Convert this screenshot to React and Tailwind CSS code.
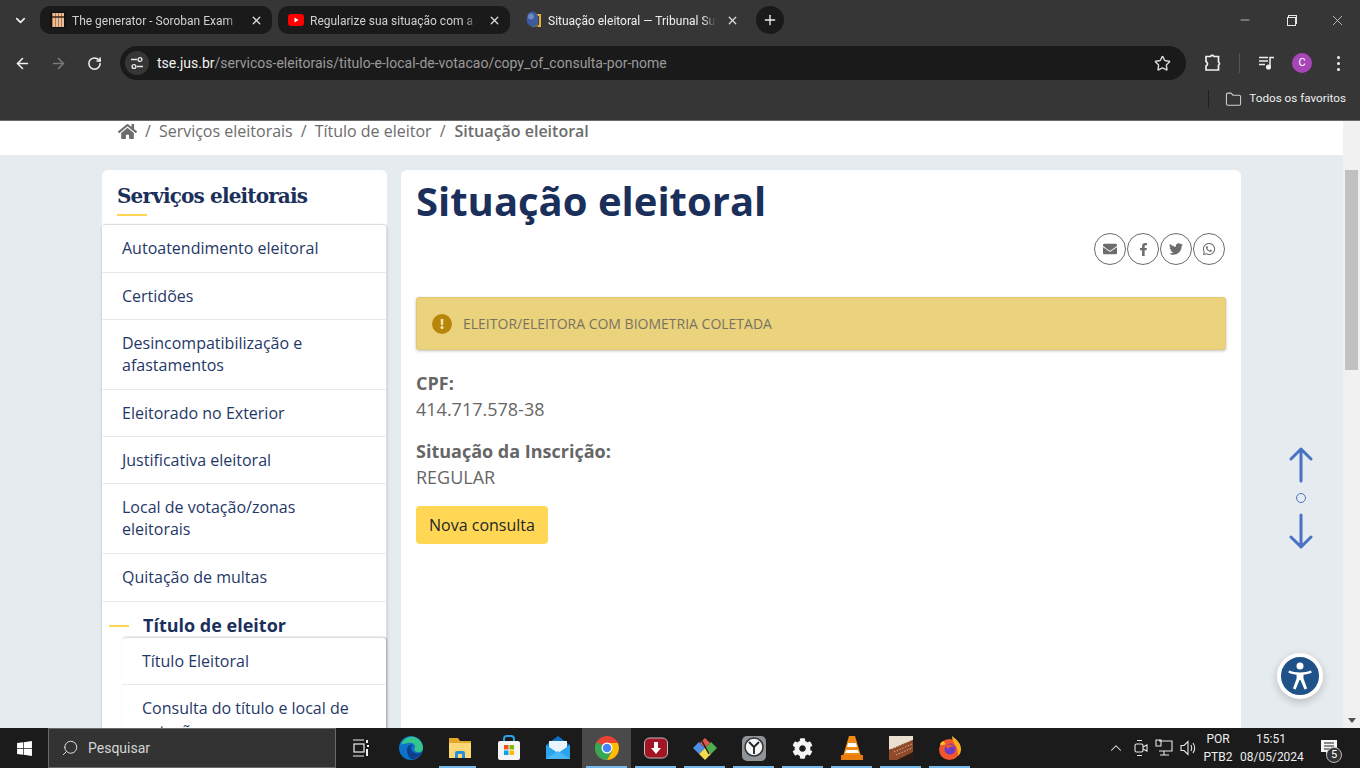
import {
  ChevronDown, ChevronUp, X, Plus, ArrowLeft, ArrowRight, RotateCw, Star, Minus, Folder, Search,
} from "lucide-react";
import { FaHome, FaEnvelope, FaFacebookF, FaTwitter, FaWhatsapp, FaExclamation, FaWindows, FaCog } from "react-icons/fa";

const uiFont = "font-['Roboto',sans-serif]";

function SorobanIcon() {
  return (
    <svg width="16" height="16" viewBox="0 0 16 16">
      <rect width="16" height="16" fill="#111" />
      <rect x="2" y="1" width="12" height="14" fill="#c8763a" />
      <path d="M4 1v14M7 1v14M10 1v14M13 1v14" stroke="#eee" strokeWidth="1.2" />
      <path d="M2 5h12" stroke="#3b2314" strokeWidth="1.5" />
    </svg>
  );
}

function YoutubeIcon() {
  return (
    <svg width="16" height="12" viewBox="0 0 16 12">
      <rect width="16" height="12" rx="3" fill="#f00" />
      <path d="M6.5 3.5v5l4-2.500z" fill="#fff" />
    </svg>
  );
}

function TseIcon() {
  return (
    <svg width="16" height="18" viewBox="0 0 16 18">
      <path d="M10 3h5v13H6v-2h7V5h-3z" fill="#e2b32c" />
      <path d="M12 16H6l6-5z" fill="#5c6b5c" />
      <ellipse cx="6.500" cy="8" rx="6" ry="7.500" fill="#3e5a9e" />
      <ellipse cx="5" cy="5.500" rx="3" ry="3" fill="#6f88c4" />
    </svg>
  );
}

function Tab({ icon, title, active }) {
  return (
    <div className={`w-[232px] h-[28px] rounded-[10px] flex items-center pl-[10px] pr-[9px] shrink-0 ${active ? "" : "bg-[#1a1a1a]"}`}>
      <div className="w-[16px] h-[16px] flex items-center justify-center shrink-0">{icon}</div>
      <div className={`ml-[6px] flex-1 overflow-hidden whitespace-nowrap text-[12px] pt-px [mask-image:linear-gradient(to_right,black_92%,transparent)] ${active ? "text-[#f0f0f0]" : "text-[#d0d0d0]"}`}>{title}</div>
      <X size={13} strokeWidth={2.4} className="ml-[10px] text-[#dddddd] shrink-0" />
    </div>
  );
}

function ExtensionIcon() {
  return (
    <svg width="18" height="18" viewBox="0 0 18 18" fill="none" stroke="#f0f0f0" strokeWidth="1.700">
      <path d="M2 2.500h4.500a2 2 0 0 1 3.500 0H14.500v5.500a1.800 1.800 0 0 1 0 3.200V16H2v-4a2.300 2.300 0 0 0 1-3.500 2.300 2.300 0 0 0-1-1z" />
    </svg>
  );
}

function MediaIcon() {
  return (
    <svg width="16" height="14" viewBox="0 0 16 14" fill="none" stroke="#f0f0f0" strokeWidth="1.500">
      <path d="M0 1.500h9M0 5h9M0 8.500h6" />
      <path d="M11 11V1.500h4" />
      <circle cx="9.500" cy="11" r="1.800" fill="#f0f0f0" />
    </svg>
  );
}

function TuneIcon() {
  return (
    <svg width="14" height="14" viewBox="0 0 14 14" fill="none" stroke="#e8e8e8" strokeWidth="1.400">
      <path d="M1 3.500h6M7 10.500h6" />
      <circle cx="10" cy="3.500" r="1.900" />
      <circle cx="4" cy="10.500" r="1.900" />
    </svg>
  );
}

function ChromeBar() {
  return (
    <div className={`h-[121px] shrink-0 bg-[#363636] border-b border-[#6a6a6a] flex flex-col ${uiFont}`}>
      {/* tabs */}
      <div className="h-[40px] flex items-start pt-[6px] relative">
        <div className="w-[40px] h-[28px] flex items-center justify-center">
          <ChevronDown size={15} strokeWidth={2.600} className="text-[#f0f0f0]" />
        </div>
        <div className="flex gap-[6px]">
          <Tab icon={<SorobanIcon />} title="The generator - Soroban Exam" />
          <Tab icon={<YoutubeIcon />} title="Regularize sua situação com a Justiça" />
          <Tab icon={<TseIcon />} title="Situação eleitoral — Tribunal Superior" active />
        </div>
        <div className="ml-[8px] w-[28px] h-[28px] rounded-full bg-[#1a1a1a] flex items-center justify-center">
          <Plus size={16} strokeWidth={2} className="text-[#eeeeee]" />
        </div>
        <div className="flex-1" />
        <div className="flex items-center h-[28px] text-[#e8e8e8]">
          <div className="w-[46px] flex justify-center"><Minus size={14} strokeWidth={1.200} /></div>
          <div className="w-[46px] flex justify-center relative">
            <div className="w-[9px] h-[9px] border border-[#e8e8e8] mt-[2px] bg-[#363636] relative z-10" />
            <div className="absolute w-[9px] h-[9px] border border-[#e8e8e8] top-[0px] ml-[3px]" />
          </div>
          <div className="w-[46px] flex justify-center"><X size={17} strokeWidth={1} /></div>
        </div>
      </div>

      {/* toolbar */}
      <div className="h-[46px] flex items-center">
        <div className="w-[120px] flex items-center">
          <div className="w-[45px] flex justify-center"><ArrowLeft size={17} strokeWidth={2.200} className="text-[#f0f0f0]" /></div>
          <div className="w-[26px] flex justify-center"><ArrowRight size={17} strokeWidth={2.200} className="text-[#7a7a7a]" /></div>
          <div className="w-[46px] flex justify-center"><RotateCw size={15} strokeWidth={2.400} className="text-[#f0f0f0]" /></div>
        </div>
        <div className="w-[1066px] h-[34px] rounded-full bg-[#1a1a1a] flex items-center pl-[5px] pr-[15px]">
          <div className="w-[24px] h-[24px] rounded-full bg-[#363636] flex items-center justify-center"><TuneIcon /></div>
          <div className="ml-[8px] text-[14px] whitespace-nowrap text-[#9a9a9a]">
            <span className="text-[#f2f2f2]">tse.jus.br</span>/servicos-eleitorais/titulo-e-local-de-votacao/copy_of_consulta-por-nome
          </div>
          <div className="flex-1" />
          <Star size={17} strokeWidth={2} className="text-[#d8d8d8]" />
        </div>
        <div className="flex items-center">
          <div className="ml-[18px]"><ExtensionIcon /></div>
          <div className="ml-[17px] w-px h-[20px] bg-[#555555]" />
          <div className="ml-[19px]"><MediaIcon /></div>
          <div className="ml-[17px] w-[20px] h-[20px] rounded-full bg-[#a846b8] text-white text-[11px] flex items-center justify-center">C</div>
          <div className="ml-[25px] flex flex-col gap-[3px]">
            <span className="w-[3px] h-[3px] rounded-full bg-[#f0f0f0]" />
            <span className="w-[3px] h-[3px] rounded-full bg-[#f0f0f0]" />
            <span className="w-[3px] h-[3px] rounded-full bg-[#f0f0f0]" />
          </div>
        </div>
      </div>

      {/* bookmarks */}
      <div className="flex-1 flex items-center justify-end pr-[14px] pb-[8px]">
        <div className="w-px h-[18px] bg-[#1f1f1f] mr-[16px]" />
        <Folder size={17} strokeWidth={1.500} className="text-[#cfcfcf] mr-[7px]" />
        <span className="text-[11.700px] text-[#eeeeee]">Todos os favoritos</span>
      </div>
    </div>
  );
}

function Crumb({ children, bold }) {
  return <span className={bold ? "font-semibold" : ""}>{children}</span>;
}

function Breadcrumb() {
  return (
    <div className="h-[34px] bg-white flex items-start pl-[118px] text-[16px] leading-[20px] text-[#6c6c6c] shrink-0">
      <FaHome size={19} className="mt-[1px]" />
      <span className="mx-[8px]">/</span>
      <Crumb>Serviços eleitorais</Crumb>
      <span className="mx-[8px]">/</span>
      <Crumb>Título de eleitor</Crumb>
      <span className="ml-[8px] mr-[9px]">/</span>
      <Crumb bold>Situação eleitoral</Crumb>
    </div>
  );
}

const menu = [
  { label: "Autoatendimento eleitoral", h: "h-[48px] pb-px" },
  { label: "Certidões", h: "h-[47px]" },
  { label: "Desincompatibilização e afastamentos", h: "h-[70px] pb-px" },
  { label: "Eleitorado no Exterior", h: "h-[47px]" },
  { label: "Justificativa eleitoral", h: "h-[47px]" },
  { label: "Local de votação/zonas eleitorais", h: "h-[70px] pb-px" },
  { label: "Quitação de multas", h: "h-[48px] pb-px" },
];

function Sidebar() {
  return (
    <div className="w-[285px] shrink-0 h-[600px] bg-white rounded-t-[6px]">
      <div className="h-[54px] pl-[15px] pt-[12px] relative">
        <h2 className="font-['DejaVu_Serif',serif] text-[20px] leading-[28px] font-bold text-[#1b2f5b] tracking-[-0.85px]">Serviços eleitorais</h2>
        <div className="absolute left-[15px] top-[44px] w-[30px] h-[2px] bg-[#ffd754]" />
      </div>
      <div className="border-t border-r border-[#dddddd] rounded-t-[4px] shadow-[0_1px_3px_rgba(0,0,0,0.2)] h-[600px]">
        {menu.map((m) => (
          <div key={m.label} className={`${m.h} pl-[20px] pr-[40px] flex items-center border-b border-[#e9e9e9] text-[16px] leading-[22px] text-[#1f3868]`}>
            {m.label}
          </div>
        ))}
        <div className="h-[35px] flex items-center pl-[41px] relative">
          <div className="absolute left-[7px] top-[23px] w-[20px] h-[2px] bg-[#ffd754]" />
          <span className="text-[18px] font-bold text-[#1b2f5b] mt-[11px]">Título de eleitor</span>
        </div>
        <div className="ml-[20px] border-t border-[#dddddd] rounded-t-[4px] shadow-[1px_0_2px_rgba(0,0,0,0.25)] bg-white h-[200px]">
          <div className="h-[47px] pl-[20px] flex items-center border-b border-[#e9e9e9] text-[16px] text-[#1f3868]">Título Eleitoral</div>
          <div className="pl-[20px] pr-[30px] pt-[12px] text-[16px] leading-[22.500px] text-[#1f3868]">Consulta do título e local de votação</div>
        </div>
      </div>
    </div>
  );
}

function ShareButton({ children }) {
  return (
    <div className="w-[32px] h-[32px] rounded-full border border-[#6c6c6c] flex items-center justify-center text-[#6c6c6c]">
      {children}
    </div>
  );
}

function MainCard() {
  return (
    <div className="w-[840px] shrink-0 h-[600px] bg-white rounded-t-[6px] px-[15px]">
      <h1 className="text-[40px] leading-[48px] font-bold text-[#1b2f5b] pt-[7px] h-[56px] box-content">Situação eleitoral</h1>
      <div className="flex justify-end gap-px pr-px">
        <ShareButton><FaEnvelope size={14} /></ShareButton>
        <ShareButton><FaFacebookF size={13} /></ShareButton>
        <ShareButton><FaTwitter size={14} /></ShareButton>
        <ShareButton><FaWhatsapp size={14} /></ShareButton>
      </div>
      <div className="mt-[32px] h-[53px] bg-[#ebd27d] border border-[#e4ca72] rounded-[3px] shadow-[0_1px_3px_rgba(0,0,0,0.25)] flex items-center pl-[15px] w-[810px]">
        <div className="w-[20px] h-[20px] rounded-full bg-[#b8860b] flex items-center justify-center">
          <FaExclamation size={10} className="text-[#f3e3ad]" />
        </div>
        <span className="ml-[11px] text-[14px] text-[#78735e]">ELEITOR/ELEITORA COM BIOMETRIA COLETADA</span>
      </div>
      <div className="mt-[20px] text-[#666666] text-[18px] leading-[26px]">
        <div className="font-bold">CPF:</div>
        <div>414.717.578-38</div>
        <div className="font-bold mt-[16px]">Situação da Inscrição:</div>
        <div>REGULAR</div>
      </div>
      <div className="mt-[16px] w-[132px] h-[38px] bg-[#ffd754] rounded-[4px] flex items-center justify-center text-[16px] text-[#212529]">Nova consulta</div>
    </div>
  );
}

function ScrollBar() {
  return (
    <div className="w-[17px] shrink-0 bg-[#f1f1f1] flex flex-col items-center relative">
      <div className="h-[49px] shrink-0" />
      <div className="w-[13px] h-[200px] bg-[#c1c1c1]" />
      <div className="flex-1" />
      <div className="w-0 h-0 border-l-[4px] border-r-[4px] border-t-[5px] border-l-transparent border-r-transparent border-t-[#505050] mb-[5px]" />
    </div>
  );
}

function Page() {
  return (
    <div className="flex-1 min-h-0 flex font-['Open_Sans',sans-serif] relative overflow-hidden">
      <div className="flex-1 min-w-0 bg-[#e6ebf0] flex flex-col">
        <Breadcrumb />
        <div className="flex gap-[14px] pl-[102px] pt-[15px]">
          <Sidebar />
          <MainCard />
        </div>
      </div>
      <ScrollBar />

      {/* floating controls */}
      <div className="absolute left-[1289px] top-[326px] flex flex-col items-center w-[24px] text-[#4a72c4]">
        <svg width="24" height="36" viewBox="0 0 24 36" fill="none" stroke="currentColor" strokeWidth="3" strokeLinecap="round" strokeLinejoin="round">
          <path d="M12 2v32M2 12 12 2l10 10" />
        </svg>
        <div className="w-[10px] h-[10px] rounded-full border border-[#4a72c4] mt-[10px]" />
        <svg className="mt-[10px]" width="24" height="36" viewBox="0 0 24 36" fill="none" stroke="currentColor" strokeWidth="3" strokeLinecap="round" strokeLinejoin="round">
          <path d="M12 2v32M2 24l10 10 10-10" />
        </svg>
      </div>
      <div className="absolute left-[1277px] top-[532px] w-[46px] h-[46px] rounded-full bg-[#1f5288] border-[4px] border-white shadow-[0_3px_8px_rgba(0,0,0,0.2)] flex items-center justify-center">
        <svg width="32" height="32" viewBox="0 0 32 32" fill="#fff">
          <circle cx="16" cy="6" r="3.500" />
          <path d="M5 10.500c3 1 7 2 11 2s8-1 11-2l.700 2.200c-2.500 1-5.200 1.700-8.200 2.100v3.700l3.600 10-2.600 1L16.500 20h-1l-3.900 9.500-2.600-1 3.600-10v-3.700c-3-.4-5.700-1.100-8.200-2.100z" />
        </svg>
      </div>
    </div>
  );
}

function EdgeIcon() {
  return (
    <svg width="24" height="24" viewBox="0 0 24 24">
      <circle cx="12" cy="12" r="12" fill="#0c74c8" />
      <path d="M2 9C4 2 11 0 15 1c5 1 9 6 9 11 0 3-3 5-6 4-3-1-3-3-2-5 0-3-3-5-7-4-3 .5-6 1-7 2z" fill="#35c48d" />
      <path d="M8 14c0-4 3-6 7-5-4 0-4 6 1 8 3 1 5 0 7-1-2 5-7 8-11 7-3-2-4-6-4-9z" fill="#0f3f8f" />
    </svg>
  );
}

function FolderIcon() {
  return (
    <svg width="24" height="24" viewBox="0 0 24 24">
      <path d="M1 2h9l2 3h11v17H1z" fill="#e3a82b" />
      <path d="M1 7h22v15H1z" fill="#fbd775" />
      <path d="M7 22v-5a2 2 0 0 1 2-2h6a2 2 0 0 1 2 2v5h-3v-4h-4v4z" fill="#2a8fd8" />
    </svg>
  );
}

function StoreIcon() {
  return (
    <svg width="24" height="26" viewBox="0 0 24 26">
      <path d="M7 7V4a3 3 0 0 1 3-3h4a3 3 0 0 1 3 3v3" fill="none" stroke="#2aa0e8" strokeWidth="2" />
      <rect x="1" y="6" width="22" height="19" rx="2" fill="#f5f5f5" />
      <rect x="7" y="10" width="4.500" height="4.500" fill="#f25022" />
      <rect x="12.500" y="10" width="4.500" height="4.500" fill="#7fba00" />
      <rect x="7" y="15.500" width="4.500" height="4.500" fill="#00a4ef" />
      <rect x="12.500" y="15.500" width="4.500" height="4.500" fill="#ffb900" />
    </svg>
  );
}

function MailIcon() {
  return (
    <svg width="24" height="24" viewBox="0 0 24 24">
      <path d="M0 9 12 0l12 9v13H0z" fill="#0f6fc0" />
      <path d="M3 5h18v12H3z" fill="#eaf4fb" />
      <path d="M0 9l12 8 12-8v14H0z" fill="#2aa4ec" />
      <path d="M0 23l12-8 12 8z" fill="#49b8f5" />
    </svg>
  );
}

function ChromeIcon() {
  return (
    <svg width="24" height="24" viewBox="0 0 24 24">
      <circle cx="12" cy="12" r="12" fill="#e94235" />
      <path d="M12 12 1.600 6A12 12 0 0 0 12 24l5-9z" fill="#34a853" />
      <path d="M12 7h10.800A12 12 0 0 1 12 24l5.200-9z" fill="#fbbc04" />
      <circle cx="12" cy="12" r="5.500" fill="#fff" />
      <circle cx="12" cy="12" r="4.300" fill="#4285f4" />
    </svg>
  );
}

function ShieldIcon() {
  return (
    <svg width="24" height="22" viewBox="0 0 24 22">
      <rect x="0.500" y="1" width="23" height="20" rx="5" fill="#a31524" stroke="#bdbdbd" />
      <path d="M10 5h4v6h3l-5 6-5-6h3z" fill="#fff" />
    </svg>
  );
}

function DiamondIcon() {
  return (
    <svg width="24" height="24" viewBox="0 0 24 24">
      <path d="M12 12l6-6 6 6-6 6z" fill="#4caf50" />
      <path d="M12 12l-6 6-6-6 6-6z" fill="#4f8fe8" />
      <path d="M12 12l6 6-6 6-6-6z" fill="#f2dc4c" />
      <path d="M12 12 7 7l5-5 5 5z" fill="#e2574c" />
      <path d="M9 5l7 13" stroke="#222" strokeWidth="1.500" />
    </svg>
  );
}

function ClockIcon() {
  return (
    <svg width="24" height="28" viewBox="0 0 24 28">
      <rect x="0" y="2" width="24" height="25" rx="5" fill="#8f9498" />
      <circle cx="12" cy="13" r="9" fill="#f4f4f4" stroke="#333" strokeWidth="1.500" />
      <path d="M12 13 7 8M12 13l5-5M12 13v7" stroke="#222" strokeWidth="1.800" />
    </svg>
  );
}

function VlcIcon() {
  return (
    <svg width="22" height="26" viewBox="0 0 22 26">
      <path d="M8 1h6l6 20H2z" fill="#f08a12" />
      <path d="M7 8h8l1 4H6zM5 15h12l1 3H4z" fill="#fff" />
      <path d="M0 20h22v5H0z" fill="#e87d0d" />
    </svg>
  );
}

function PhotoIcon() {
  return (
    <svg width="24" height="24" viewBox="0 0 24 24">
      <rect width="24" height="24" fill="#2a1c14" />
      <path d="M0 0h24v4L0 14z" fill="#e9e0d0" />
      <path d="M0 14 24 4v12L8 24H0z" fill="#8f4a2c" />
      <path d="M3 13l18-8M5 16l18-8M7 19l16-7" stroke="#d8b18f" strokeWidth="1" strokeDasharray="1.500 1.500" />
    </svg>
  );
}

function FirefoxIcon() {
  return (
    <svg width="24" height="24" viewBox="0 0 24 24">
      <circle cx="11.500" cy="13.500" r="10.500" fill="#f0572c" />
      <path d="M14 0c4 3 9 7 9 13 0 3-1 5-3 7 0-6-1-9-3-11-1-3-3-5-3-9z" fill="#ffb020" />
      <path d="M2 8c1-2 3-3 4-3 0 2 1 2 2 3-3 1-5 2-6 0z" fill="#ffc02e" />
      <circle cx="12" cy="13" r="5.500" fill="#6a3dc8" />
      <path d="M7 10c3-2 7-2 10 1-3-1-6 0-7 2z" fill="#f0572c" />
    </svg>
  );
}

function TaskApp({ children, active, running, stacked }) {
  return (
    <div className={`relative w-[49px] h-[40px] flex items-center justify-center shrink-0 ${active ? "bg-[#4a4a4a]" : ""}`}>
      {children}
      {running && <div className={`absolute bottom-0 left-[4px] h-[2px] bg-[#76b9ed] ${stacked ? "right-[8px]" : "right-[4px]"}`} />}
    </div>
  );
}

function Taskbar() {
  return (
    <div className={`h-[40px] shrink-0 bg-[#1b1b1b] flex items-center text-white ${uiFont}`}>
      <div className="w-[48px] flex justify-center"><FaWindows size={17} /></div>
      <div className="w-[288px] h-[40px] bg-[#333333] border border-[#6a6a6a] flex items-center pl-[12px]">
        <Search size={18} strokeWidth={1.300} className="-scale-x-100 text-[#e0e0e0]" />
        <span className="ml-[9px] text-[14px] text-[#d5d5d5]">Pesquisar</span>
      </div>
      <div className="w-[50px] flex justify-center">
        <svg width="16" height="18" viewBox="0 0 16 18" fill="none" stroke="#f0f0f0" strokeWidth="1.200">
          <path d="M0 1h11M0 17h11" />
          <rect x="1" y="5" width="10" height="8" />
          <path d="M14 1v3M14 7h2M14 10v7" strokeWidth="2" />
        </svg>
      </div>
      <div className="flex">
        <TaskApp><EdgeIcon /></TaskApp>
        <TaskApp running stacked><FolderIcon /></TaskApp>
        <TaskApp><StoreIcon /></TaskApp>
        <TaskApp><MailIcon /></TaskApp>
        <TaskApp active running><ChromeIcon /></TaskApp>
        <TaskApp running><ShieldIcon /></TaskApp>
        <TaskApp running><DiamondIcon /></TaskApp>
        <TaskApp running><ClockIcon /></TaskApp>
        <TaskApp running><FaCog size={21} className="text-[#f4f4f4]" /></TaskApp>
        <TaskApp running><VlcIcon /></TaskApp>
        <TaskApp running><PhotoIcon /></TaskApp>
        <TaskApp running><FirefoxIcon /></TaskApp>
      </div>
      <div className="flex-1" />
      <ChevronUp size={18} strokeWidth={1.400} className="text-[#eeeeee]" />
      <svg className="ml-[9px]" width="14" height="18" viewBox="0 0 14 18" fill="none" stroke="#e8e8e8" strokeWidth="1.100">
        <rect x="1" y="5" width="8" height="8" rx="1.500" /><path d="M9 8l4-2v6l-4-2M3 1.500h5M3 16.500h5" />
      </svg>
      <svg className="ml-[7px]" width="18" height="18" viewBox="0 0 18 18" fill="none" stroke="#e8e8e8" strokeWidth="1.100">
        <path d="M4 2h13v10H4M9 12v4M5 16h9M1 1h5v6H1z" />
      </svg>
      <svg className="ml-[7px]" width="17" height="18" viewBox="0 0 17 18" fill="none" stroke="#e8e8e8" strokeWidth="1.100">
        <path d="M1 6.500h3l4-4v13l-4-4H1zM11 6c1 2 1 4 0 6M13 4c2 3 2 7 0 10" />
      </svg>
      <div className="w-[42px] text-[12px] leading-[18px] text-center text-[#eeeeee]">POR<br />PTB2</div>
      <div className="w-[62px] ml-[1px] text-[12px] leading-[18px] text-center text-[#eeeeee]">15:51<br />08/05/2024</div>
      <div className="w-[38px] ml-[8px] mr-[12px] relative flex justify-center">
        <svg width="16" height="16" viewBox="0 0 16 16"><path d="M0 0h16v12H8l-3 3v-3H0z" fill="#f4f4f4" /><path d="M3 3h10M3 6h10M3 9h7" stroke="#222" /></svg>
        <div className="absolute left-[16px] top-[7px] w-[16px] h-[16px] rounded-full bg-[#333333] border border-[#bbbbbb] text-[11px] leading-[14px] text-center text-white">5</div>
      </div>
    </div>
  );
}

export default function App() {
  return (
    <div className="w-[1360px] h-[768px] flex flex-col overflow-hidden">
      <ChromeBar />
      <Page />
      <Taskbar />
    </div>
  );
}
